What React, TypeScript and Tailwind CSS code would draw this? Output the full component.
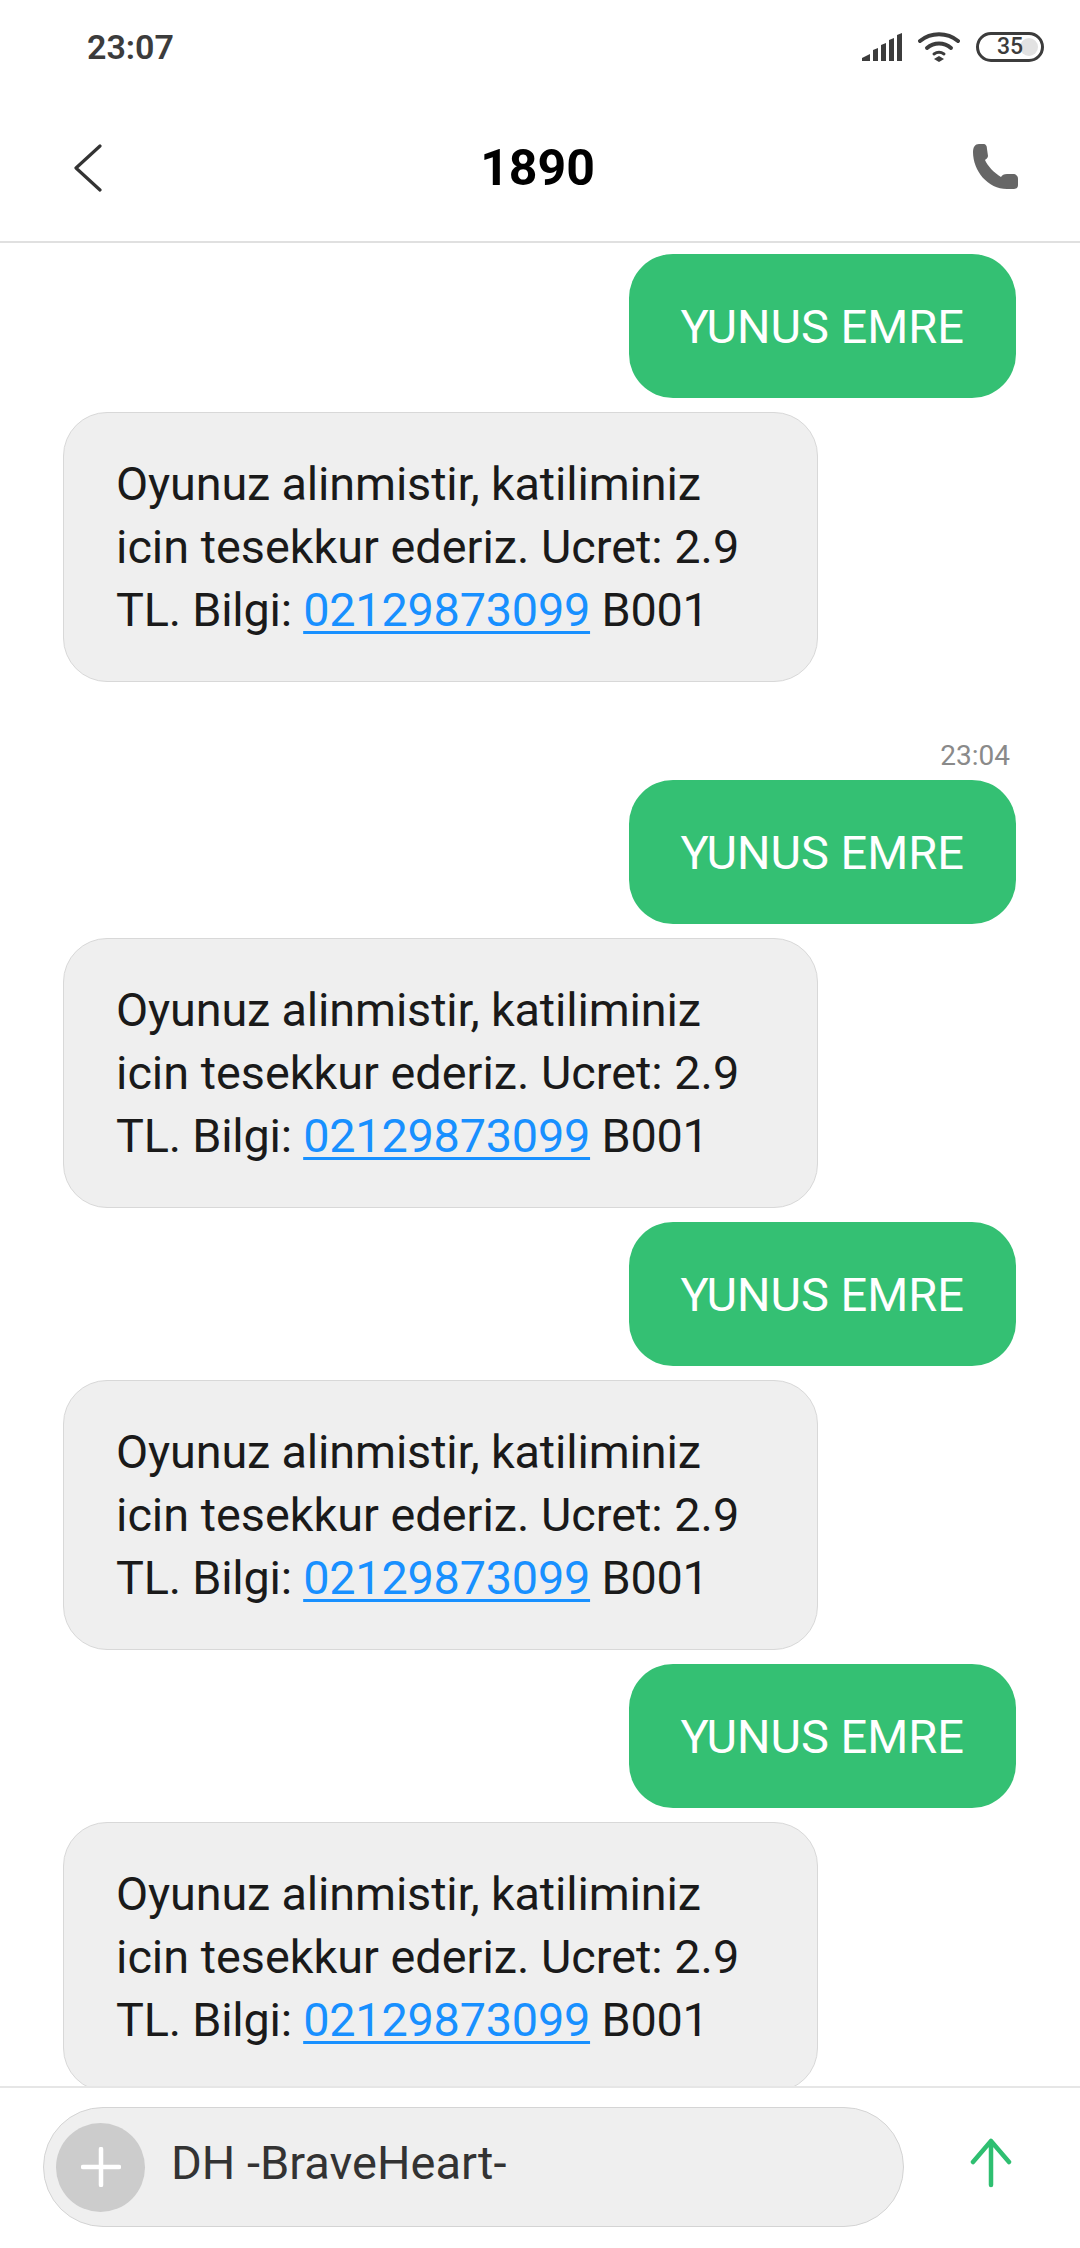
const font = "font-['Roboto','Liberation_Sans',sans-serif]";

const SentBubble = () => (
  <div className="flex shrink-0 justify-end pr-[64px]">
    <div className="rounded-[44px] bg-[#34c073] px-[52px] py-[40.5px] text-[47px] leading-[63px] text-white">
      YUNUS EMRE
    </div>
  </div>
);

const ReceivedBubble = () => (
  <div className="flex shrink-0 justify-start pl-[63px]">
    <div className="w-[755px] rounded-[44px] border border-[#d8d8d8] bg-[#efefef] px-[52px] py-[39.5px] text-[46.8px] leading-[63px] text-[#1a1a1a]">
      <div className="whitespace-nowrap tracking-[-0.15px]">Oyunuz alinmistir, katiliminiz</div>
      <div className="whitespace-nowrap">icin tesekkur ederiz. Ucret: 2.9</div>
      <div className="whitespace-nowrap tracking-[-0.22px]">
        TL. Bilgi: <span className="text-[#1890ff] underline decoration-[3px] underline-offset-[5px]">02129873099</span> B001
      </div>
    </div>
  </div>
);

const StatusIcons = () => (
  <div className="flex items-center gap-[16px]">
    <svg width="40" height="28" viewBox="0 0 40 28" fill="#3c3c3c">
      <path d="M0 28v-3l8-4v7z" />
      <path d="M11 28V17l5-2v13z" />
      <path d="M19 28V12l5-2v18z" />
      <path d="M27 28V7l5-2v23z" />
      <path d="M35 28V2l5-2v28z" />
    </svg>
    <svg width="42" height="30" viewBox="0 0 42 30" fill="none" stroke="#3c3c3c" strokeWidth="4" strokeLinecap="round">
      <path d="M2 9c11-9 27-9 38 0" />
      <path d="M9 16c7-6 17-6 24 0" />
      <path d="M16 22c3-2 7-2 10 0" strokeWidth="3" />
      <path d="M21 24l5 3-5 3-5-3z" fill="#3c3c3c" stroke="none" />
    </svg>
    <div className="relative flex h-[30px] w-[68px] items-center justify-center overflow-hidden rounded-full border-[3px] border-[#3c3c3c] p-[3px]">
      <div className="h-full w-full overflow-hidden rounded-full">
        <div className="h-full w-[36%] translate-x-[38px] rounded-full bg-[#e2e2e2]" />
      </div>
      <span className="absolute inset-0 flex items-center justify-center text-[23px] font-medium text-[#3c3c3c]">35</span>
    </div>
  </div>
);

export default function App() {
  return (
    <div className={`${font} flex h-[2248px] w-[1080px] flex-col overflow-hidden bg-white`}>
      <div className="flex h-[96px] shrink-0 items-center justify-between pb-[2px] pl-[87px] pr-[36px]">
        <span className="text-[34px] font-semibold text-[#3c3c3c]">23:07</span>
        <StatusIcons />
      </div>

      <div className="flex h-[147px] shrink-0 items-center justify-between border-b-2 border-[#e0e0e0] pl-[74px] pr-[62px]">
        <svg className="-mt-[2px]" width="28" height="48" viewBox="0 0 28 48" fill="none" stroke="#333333" strokeWidth="3.2" strokeLinecap="round" strokeLinejoin="round">
          <path d="M26 2L2 24l24 22" />
        </svg>
        <span className="-mt-[2px] text-[50px] font-bold leading-none text-black">1890</span>
        <svg className="-mt-[5px]" width="45" height="45" viewBox="0 0 45 45" fill="#666666">
          <path d="M0 8C0 3 2 0 6 0H10C13 0 14 2 14 5L15 12C15 14 13 15 12 16C14 21 21 29 28 33C29 31 31 30 34 30H40C43 30 45 32 45 35V41C45 44 43 45 40 45H34C15 45 0 27 0 8Z" />
        </svg>
      </div>

      <div className="flex min-h-0 flex-1 flex-col gap-[14px] overflow-hidden pt-[11px]">
        <SentBubble />
        <ReceivedBubble />
        <div className="-mb-[14px] flex h-[84px] shrink-0 items-end justify-end pb-[4px] pr-[70px] text-[28px] leading-[40px] text-[#8a8a8a]">23:04</div>
        <SentBubble />
        <ReceivedBubble />
        <SentBubble />
        <ReceivedBubble />
        <SentBubble />
        <ReceivedBubble />
      </div>

      <div className="flex h-[162px] shrink-0 items-start border-t-2 border-[#e6e6e6] pl-[43px] pt-[19px]">
        <div className="flex h-[120px] w-[861px] items-center gap-[26px] rounded-full border border-[#d4d4d4] bg-[#efefef] pl-[12px]">
          <div className="flex h-[89px] w-[89px] shrink-0 items-center justify-center rounded-full bg-[#cccccc]">
            <svg width="40" height="40" viewBox="0 0 40 40" stroke="#ffffff" strokeWidth="4.5" strokeLinecap="round">
              <path d="M20 2v36M2 20h36" />
            </svg>
          </div>
          <span className="-mt-[8px] text-[47px] text-[#333333]">DH -BraveHeart-</span>
        </div>
        <svg className="ml-[65px] mt-[31px]" width="44" height="50" viewBox="0 0 44 50" fill="none" stroke="#2fbf71" strokeWidth="4.5" strokeLinecap="round" strokeLinejoin="round">
          <path d="M22 47V3M4 24L22 3l18 21" />
        </svg>
      </div>
    </div>
  );
}
